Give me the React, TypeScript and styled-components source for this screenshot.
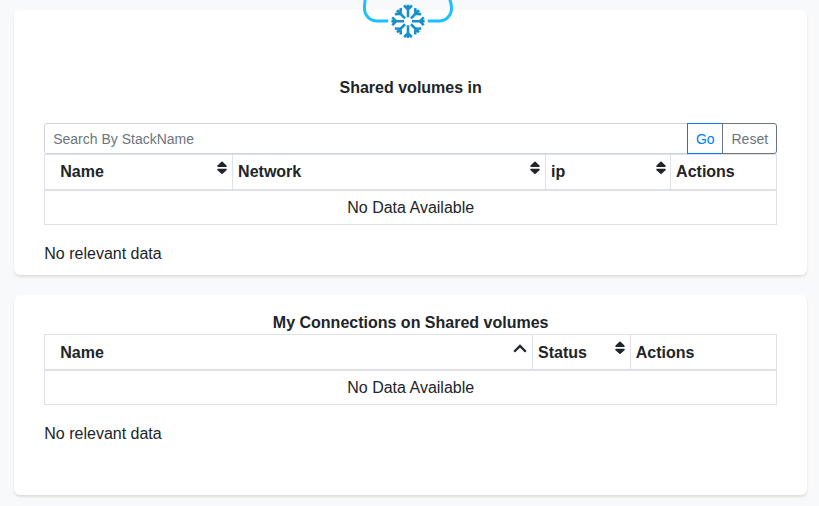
import React from "react";
import styled, { createGlobalStyle } from "styled-components";

const GlobalStyle = createGlobalStyle`
  *, *::before, *::after { box-sizing: border-box; }
  html { overflow: hidden; }
  body {
    margin: 0;
    background: #f8f9fb;
    color: #212529;
    font: 16px/24px "Liberation Sans", Arial, sans-serif;
  }
`;

const Page = styled.main`
  height: 506px;
  padding: 10px 12px 0 14px;
  overflow: hidden;
`;

const Card = styled.section<{ $height: number; $top: number }>`
  position: relative;
  height: ${(p) => p.$height}px;
  margin-bottom: 20px;
  padding: ${(p) => p.$top}px 30px 0;
  background: #fff;
  border-radius: 6px;
  box-shadow: 0 2px 2px rgba(204, 197, 185, 0.5);
`;

const Title = styled.h2`
  margin: 0 0 -1px;
  padding-left: 0.3px;
  font-size: 16px;
  line-height: 24px;
  font-weight: 700;
  text-align: center;
`;

const Logo = styled.svg`
  position: absolute;
  top: -10px;
  left: 346px;
  display: block;
`;

const SearchBar = styled.div`
  display: flex;
  height: 31px;
  margin-top: 24px;
`;

const SearchInput = styled.input`
  flex: 1;
  min-width: 0;
  height: 31px;
  padding: 4px 8px 4px 8.2px;
  border: 1px solid #ced4da;
  border-radius: 3px 0 0 3px;
  background: #fff;
  font: 14px/21px "Liberation Sans", Arial, sans-serif;
  outline: none;
  &::placeholder { color: #6c757d; opacity: 1; }
`;

const BarButton = styled.button<{ $color: string; $width: number; $last?: boolean }>`
  width: ${(p) => p.$width}px;
  height: 31px;
  margin: 0 0 0 -1px;
  padding: 5px 0 3px 0.6px;
  border: 1px solid ${(p) => p.$color};
  border-radius: ${(p) => (p.$last ? "0 3px 3px 0" : "0")};
  background: #fff;
  color: ${(p) => p.$color};
  font: 14px/21px "Liberation Sans", Arial, sans-serif;
  text-align: center;
`;

const Table = styled.table`
  width: 733px;
  margin: 0 0 17px;
  table-layout: fixed;
  border-collapse: collapse;
  border: 1px solid #dee2e6;
`;

const Col = styled.col<{ $width: number }>`
  width: ${(p) => p.$width}px;
`;

const HeadCell = styled.th<{ $drop: number; $inset?: number; $end?: number }>`
  height: 35px;
  padding: ${(p) => p.$drop}px ${(p) => p.$end ?? 4}px 0 ${(p) => p.$inset ?? 5.1}px;
  border: 1px solid #dee2e6;
  border-bottom-width: 2px;
  text-align: left;
  vertical-align: top;
`;

const HeadContent = styled.div`
  display: flex;
  justify-content: space-between;
  height: 24px;
`;

const EmptyCell = styled.td`
  height: 35px;
  padding: 1px 0 0 0.4px;
  border: 1px solid #dee2e6;
  text-align: center;
`;

const Note = styled.p`
  margin: 0;
  padding-left: 0.3px;
`;

const SortIcon = styled.svg<{ $nudge: number }>`
  flex: none;
  margin-top: ${(p) => 2 - p.$nudge}px;
`;

type Sort = "both" | "asc";
type Column = { label: string; width: number; sort?: Sort; inset?: number; end?: number };

const Sorter = ({ kind, nudge }: { kind: Sort; nudge: number }) =>
  kind === "both" ? (
    <SortIcon $nudge={nudge} width="12" height="14" viewBox="0 0 12 14">
      <path d="M5.4 .7Q6 .1 6.6 .7L10.5 4.6Q11.3 6 10 6H2Q.7 6 1.5 4.6ZM5.4 12.8Q6 13.4 6.6 12.8L10.5 9.2Q11.3 7.8 10 7.8H2Q.7 7.8 1.5 9.2Z" fill="#212529" />
    </SortIcon>
  ) : (
    <SortIcon $nudge={nudge} width="16" height="14" viewBox="0 0 16 14">
      <path d="M2.2 10.7L8 4.9L13.8 10.7" fill="none" stroke="#212529" strokeWidth="2.3" />
    </SortIcon>
  );

type DataTableProps = { columns: Column[]; drop: number; nudge: number };

const DataTable = ({ columns, drop, nudge }: DataTableProps) => (
  <Table>
    <colgroup>
      {columns.map((c) => <Col key={c.label} $width={c.width} />)}
    </colgroup>
    <thead>
      <tr>
        {columns.map((c) => (
          <HeadCell key={c.label} $drop={drop} $inset={c.inset} $end={c.end}>
            <HeadContent>
              {c.label}
              {c.sort && <Sorter kind={c.sort} nudge={nudge} />}
            </HeadContent>
          </HeadCell>
        ))}
      </tr>
    </thead>
    <tbody>
      <tr>
        <EmptyCell colSpan={columns.length}>No Data Available</EmptyCell>
      </tr>
    </tbody>
  </Table>
);

const ARMS = [0, 45, 90, 135, 180, 225, 270, 315];

const CloudLogo = () => (
  <Logo width="96" height="42" viewBox="0 0 96 42">
    <path d="M5.2 0Q4.5 3 4.5 8.5A12.5 12.5 0 0 0 17 21H28.3M67.8 21H79A12.5 12.5 0 0 0 91.5 8.5Q91.5 3 89.5 -1" fill="none" stroke="#1cbfff" strokeWidth="3" />
    {ARMS.map((angle) => (
      <path
        key={angle}
        d={angle % 90 === 0 ? "M0-4V-16.6M-3.9-15.8L0-11.9L3.9-15.8" : "M0-4.2V-15.6M-4.2-14.4L0-10.6L4.2-14.4"}
        transform={`translate(48 21.3) rotate(${angle})`}
        fill="none"
        stroke="#1591c8"
        strokeWidth="2.6"
      />
    ))}
    <path d="M45.3 18.6H50.7V24H45.3Z" fill="#fff" />
  </Logo>
);

const volumeColumns: Column[] = [
  { label: "Name", width: 188, sort: "both", inset: 15.3 },
  { label: "Network", width: 313, sort: "both" },
  { label: "ip", width: 125, sort: "both", end: 3 },
  { label: "Actions", width: 106 },
];

const connectionColumns: Column[] = [
  { label: "Name", width: 488, sort: "asc", inset: 15.3 },
  { label: "Status", width: 98, sort: "both" },
  { label: "Actions", width: 146, inset: 4.7 },
];

export default function App() {
  return (
    <>
      <GlobalStyle />
      <Page>
        <Card $height={265} $top={66}>
          <CloudLogo />
          <Title>Shared volumes in</Title>
          <SearchBar>
            <SearchInput placeholder="Search By StackName" />
            <BarButton $color="#007bff" $width={36}>Go</BarButton>
            <BarButton $color="#6c757d" $width={55} $last>Reset</BarButton>
          </SearchBar>
          <DataTable columns={volumeColumns} drop={5} nudge={1} />
          <Note>No relevant data</Note>
        </Card>
        <Card $height={200} $top={16}>
          <Title>My Connections on Shared volumes</Title>
          <DataTable columns={connectionColumns} drop={6} nudge={2} />
          <Note>No relevant data</Note>
        </Card>
      </Page>
    </>
  );
}
